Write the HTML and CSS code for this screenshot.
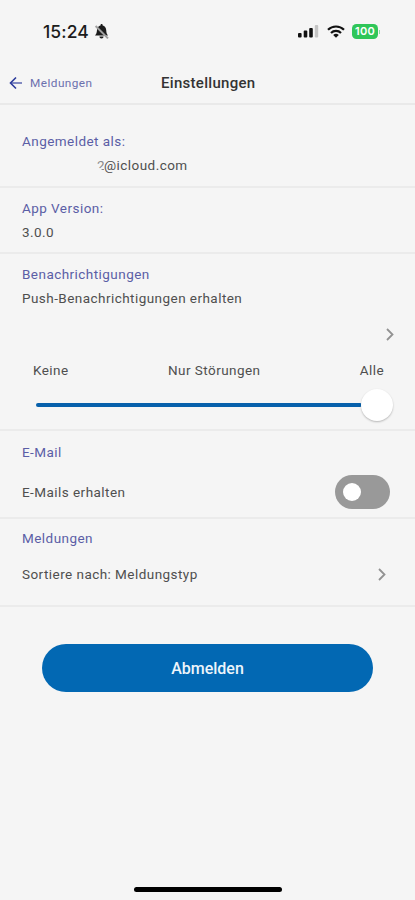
FILE: index.html
```html
<!DOCTYPE html>
<html lang="de">
<head>
  <meta charset="UTF-8">
  <meta name="viewport" content="width=device-width, initial-scale=1.0">
  <title>Einstellungen</title>
  <link rel="stylesheet" href="styles.css">
</head>
<body>
  <div class="statusbar">
    <span class="time">15:24</span>
    <svg class="bell" width="17" height="17" viewBox="0 0 17 17">
      <path d="M2 12.500C3.500 11 3.700 9.500 4 7 4.200 4.400 5.600 2.800 7.500 2.400 7.500 .6 9.700 .6 9.700 2.400 11.600 2.800 13 4.400 13.200 7c.2 2.500.4 4 1.800 5.500zM6.400 13.400h4.200a2.100 2.100 0 0 1-4.200 0z" fill="#1c1c1c"/>
      <path d="M2.600 3l12.400 12.400" stroke="#a0a0a0" stroke-width="2"/>
    </svg>
    <svg class="signal" width="21" height="13" viewBox="0 0 21 13">
      <rect x="0" y="8" width="3.600" height="4.500" rx="1" fill="#111"/>
      <rect x="5.700" y="5.500" width="3.600" height="7" rx="1" fill="#111"/>
      <rect x="11.200" y="3" width="3.600" height="9.500" rx="1" fill="#111"/>
      <rect x="16.800" y="0" width="3.400" height="12.500" rx="1" fill="#c4c4c4"/>
    </svg>
    <svg class="wifi" width="18" height="13" viewBox="0 0 18 13">
      <g fill="none" stroke="#111" stroke-width="2.200">
        <path d="M1 4.800a11.300 11.300 0 0 1 16 0"/>
        <path d="M4 8a7.100 7.100 0 0 1 10 0"/>
      </g>
      <path d="M9 12.800L6.200 10a4 4 0 0 1 5.600 0z" fill="#111"/>
    </svg>
    <span class="battery">100</span>
    <span class="battery-tip"></span>
  </div>

  <header class="header">
    <a class="back">
      <svg width="14" height="14" viewBox="0 0 14 14" fill="none" stroke-width="1.600">
        <path d="M2 7h11" stroke="#6670b5"/>
        <path d="M7 1.500L1.500 7 7 12.500" stroke="#2b3a9b"/>
      </svg>
      <span>Meldungen</span>
    </a>
    <h1>Einstellungen</h1>
  </header>

  <main>
    <section class="account">
      <h2>Angemeldet als:</h2>
      <p class="mail"><span class="masked">2</span>@icloud.com</p>
    </section>

    <section class="version">
      <h2>App Version:</h2>
      <p>3.0.0</p>
    </section>

    <section class="push">
      <h2>Benachrichtigungen</h2>
      <p>Push-Benachrichtigungen erhalten</p>
      <div class="more">
        <svg class="chevron" width="8" height="13" viewBox="0 0 8 13"><path d="M1 1l5.500 5.500L1 12"/></svg>
      </div>
      <div class="steps">
        <span>Keine</span>
        <span>Nur Störungen</span>
        <span>Alle</span>
      </div>
      <div class="slider">
        <div class="track"></div>
        <div class="thumb"></div>
      </div>
    </section>

    <section class="email">
      <h2>E-Mail</h2>
      <div class="row">
        <p>E-Mails erhalten</p>
        <div class="toggle"><div class="knob"></div></div>
      </div>
    </section>

    <section class="sort">
      <h2>Meldungen</h2>
      <div class="row">
        <p>Sortiere nach: Meldungstyp</p>
        <svg class="chevron" width="8" height="13" viewBox="0 0 8 13"><path d="M1 1l5.500 5.500L1 12"/></svg>
      </div>
    </section>

    <button class="logout">Abmelden</button>
  </main>

  <div class="home"></div>
</body>
</html>
```
FILE: styles.css
```css
* {
  box-sizing: border-box;
}
body {
  margin: 0;
  height: 900px;
  display: flex;
  flex-direction: column;
  font-family: Roboto, sans-serif;
  font-size: 13.5px;
  letter-spacing: 0.45px;
  color: #4f4f4f;
  background-color: #f5f5f5;
}
h1, h2, p {
  margin: 0;
  font-weight: 400;
}

/* status bar */
.statusbar {
  height: 63px;
  display: flex;
  align-items: center;
  padding-left: 43px;
}
.time {
  width: 49px;
  font-family: Inter, sans-serif;
  font-size: 17.5px;
  font-weight: 500;
  letter-spacing: 0.1px;
  color: #1c1c1c;
}
.bell {
  margin-left: 1px;
}
.signal {
  margin-left: 188px;
}
.wifi {
  margin-left: 8px;
}
.battery {
  width: 26px;
  height: 15px;
  margin-left: 7px;
  border-radius: 4.5px;
  background-color: #2fc659;
  color: #fff;
  font-family: Inter, sans-serif;
  font-size: 11px;
  font-weight: 600;
  letter-spacing: 0.2px;
  line-height: 15px;
  text-align: center;
}
.battery-tip {
  width: 1px;
  height: 4px;
  margin-left: 1px;
  background-color: #8fdca6;
}

/* header */
.header {
  height: 42px;
  display: grid;
  grid-template-columns: 161px 1fr;
  align-items: center;
  border-bottom: 2px solid #e9e9e9;
}
.back {
  display: flex;
  align-items: center;
  gap: 7px;
  padding-left: 9px;
  font-size: 11.8px;
  color: #6c70ae;
}
h1 {
  font-size: 15px;
  font-weight: 500;
  letter-spacing: 0.3px;
  color: #333;
}

/* sections */
section {
  padding: 9px 22px 7px;
  border-bottom: 2px solid #ebebeb;
  line-height: 24px;
}
h2 {
  font-size: 13.5px;
  color: #5b5ea6;
}
.row {
  display: flex;
  align-items: center;
  justify-content: space-between;
}
.chevron path {
  fill: none;
  stroke: #929292;
  stroke-width: 1.8;
}
.account {
  padding-top: 24px;
  padding-bottom: 9px;
}
.mail {
  padding-left: 75px;
}
.masked {
  display: inline-block;
  width: 7px;
  color: #8a8a8a;
  clip-path: polygon(0 0, 100% 35%, 100% 100%, 60% 65%, 0 60%);
}
.version {
  padding-top: 8px;
  padding-bottom: 8px;
}

.push {
  height: 177px;
  padding-top: 8px;
}
.more {
  height: 48px;
  display: flex;
  align-items: center;
  justify-content: flex-end;
  margin-right: -1px;
}
.steps {
  display: grid;
  grid-template-columns: 135px 1fr auto;
  padding: 0 9px 0 11px;
}
.slider {
  height: 46px;
  display: flex;
  align-items: center;
  padding-left: 14px;
}
.track {
  width: 326px;
  height: 4px;
  border-radius: 2px;
  background-color: #0760ab;
}
.thumb {
  width: 32px;
  height: 32px;
  margin-left: -1px;
  border-radius: 50%;
  background-color: #fff;
  box-shadow: 0 1px 2px rgba(0, 0, 0, 0.25);
}

.email {
  height: 88px;
  padding-right: 25px;
}
.email .row {
  height: 55px;
}
.toggle {
  width: 55px;
  height: 34px;
  padding: 8px;
  border-radius: 17px;
  background-color: #999;
}
.knob {
  width: 18px;
  height: 18px;
  border-radius: 50%;
  background-color: #fff;
}
.sort {
  height: 88px;
  padding-top: 7px;
  padding-right: 29px;
}
.sort .row {
  height: 48px;
}

.logout {
  display: block;
  width: 331px;
  height: 48px;
  margin: 37px auto 0;
  border: none;
  border-radius: 24px;
  background-color: #0268b3;
  color: #edf5fb;
  font-family: Roboto, sans-serif;
  font-size: 16px;
  font-weight: 500;
  letter-spacing: 0;
}
.home {
  width: 148px;
  height: 5px;
  margin: auto auto 8px;
  border-radius: 3px;
  background-color: #000;
}
```
